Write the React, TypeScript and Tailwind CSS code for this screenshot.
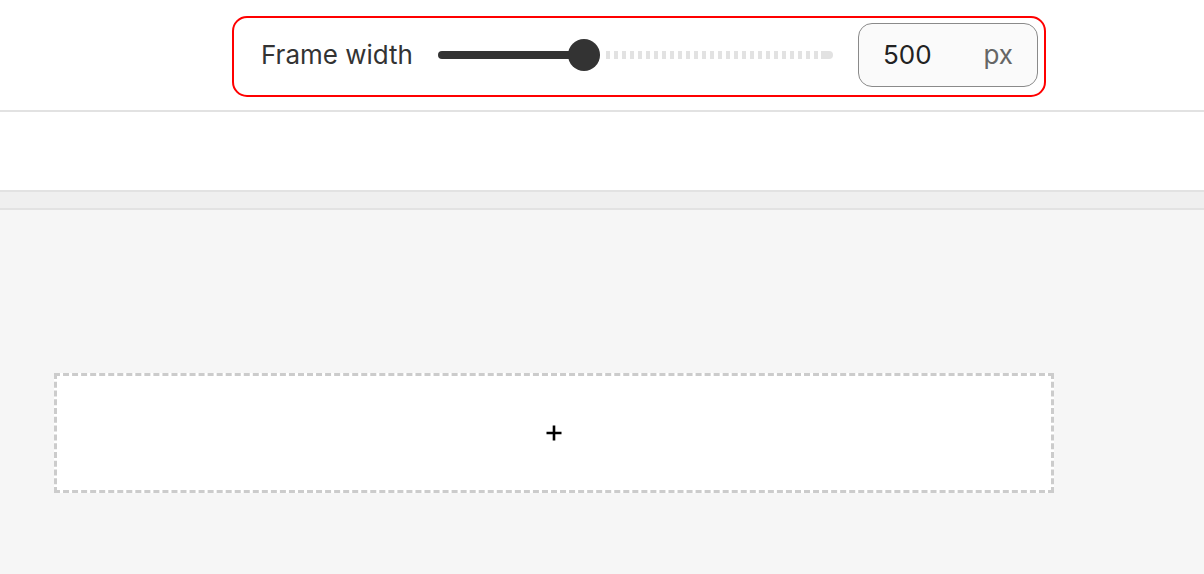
export default function App() {
    return (
        <div className="w-[1204px] h-[574px] flex flex-col bg-[#f6f6f6] overflow-hidden" style={{fontFamily: "Inter, 'Noto Sans', sans-serif"}}>
            {/* toolbar */}
            <div className="h-[112px] shrink-0 bg-white border-b-2 border-[#e2e2e2] pt-4">
                <div className="ml-[232px] w-[814px] h-[81px] flex items-center border-2 border-[#ff0000] rounded-[15px] bg-white pl-[27px] pr-[6px]">
                    <span className="w-[152px] text-[26px] text-[#333] leading-none -mt-[3px] whitespace-nowrap">Frame width</span>
                    <div className="ml-[25px] w-[395px] h-8 flex items-center relative -mt-[3px]">
                        <div className="w-[146px] h-2 rounded-full bg-[#333]" />
                        <div className="w-[22px]" />
                        <div className="flex-1 h-2 bg-[repeating-linear-gradient(90deg,#e2e2e2_0_4px,transparent_4px_8px)]" />
                        <div className="w-[12px] h-2 rounded-r-full bg-[#e2e2e2]" />
                        <div className="absolute left-[130px] top-0 w-8 h-8 rounded-full bg-[#333]" />
                    </div>
                    <div className="ml-[25px] w-[180px] h-16 flex items-center justify-between rounded-[14px] border border-[#8a8a8a] bg-[#fafafa] pl-6 pr-6 -mt-[3px]">
                        <span className="text-[26px] text-[#222] leading-none">500</span>
                        <span className="text-[26px] text-[#666] leading-none">px</span>
                    </div>
                </div>
            </div>
            {/* empty bar */}
            <div className="h-[80px] shrink-0 bg-white border-b-2 border-[#e2e2e2]" />
            {/* tab strip */}
            <div className="h-[18px] shrink-0 bg-[#efefef] border-b-2 border-[#e2e2e2]" />
            {/* canvas */}
            <div className="flex-1 pt-[163px] pl-[54px]">
                <div className="w-[1000px] h-[120px] bg-white border-[3px] border-dashed border-[#cccccc] flex items-center justify-center">
                    <svg width="18" height="18" viewBox="0 0 18 18" className="-ml-[1px]">
                        <path d="M9 1.5v15M1.5 9h15" stroke="#000" strokeWidth="2.6" />
                    </svg>
                </div>
            </div>
        </div>
    );
}
